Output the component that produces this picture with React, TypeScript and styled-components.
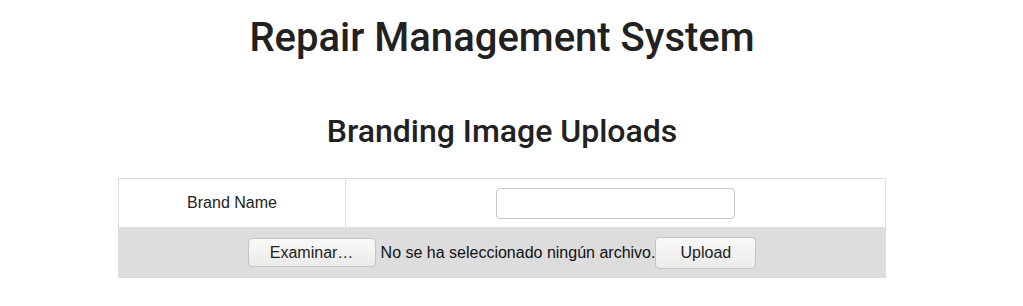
import styled, { createGlobalStyle } from 'styled-components';

const GlobalStyle = createGlobalStyle`
  html, body {
    margin: 0;
    padding: 0;
    background: #fff;
  }
  body {
    font-family: "Liberation Sans", Arial, sans-serif;
    color: #222;
  }
`;

const Page = styled.div`
  width: 1004px;
  display: flex;
  flex-direction: column;
  align-items: center;
  padding-top: 14px;
`;

const Title = styled.h1`
  margin: 0;
  font-family: Roboto, "Noto Sans", sans-serif;
  font-weight: 500;
  font-size: 40px;
  line-height: 48px;
  color: #212121;
`;

const Subtitle = styled.h2`
  margin: 50px 0 28px;
  font-family: Roboto, "Noto Sans", sans-serif;
  font-weight: 500;
  font-size: 32px;
  line-height: 38px;
  color: #212121;
`;

const Table = styled.table`
  width: 768px;
  border-collapse: collapse;
  font-size: 16px;
`;

const Row = styled.tr<{ $shaded?: boolean }>`
  background: ${(p) => (p.$shaded ? '#dddddd' : '#fff')};
`;

const Cell = styled.td<{ $width?: number; $height: number }>`
  border: 1px solid #dddddd;
  width: ${(p) => (p.$width ? `${p.$width}px` : 'auto')};
  height: ${(p) => p.$height}px;
  padding: 0;
  text-align: center;
  vertical-align: middle;
`;

const TextInput = styled.input`
  width: 239px;
  height: 31px;
  box-sizing: border-box;
  border: 1px solid #c8c8c8;
  border-radius: 4px;
  background: #fff;
  font: inherit;
  outline: none;
`;

const UploadLine = styled.div`
  display: flex;
  align-items: center;
  justify-content: center;
`;

const FakeButton = styled.button<{ $width: number; $height: number }>`
  width: ${(p) => p.$width}px;
  height: ${(p) => p.$height}px;
  padding: 0;
  box-sizing: border-box;
  border: 1px solid #c4c4c4;
  border-radius: 4px;
  background: linear-gradient(#f8f8f6, #ebebe9);
  font-family: "Liberation Sans", Arial, sans-serif;
  font-size: 16px;
  color: #222;
  cursor: pointer;
`;

const FileStatus = styled.span`
  margin-left: 5px;
  color: #111;
`;

export default function App() {
  return (
    <>
      <GlobalStyle />
      <Page>
        <Title>Repair Management System</Title>
        <Subtitle>Branding Image Uploads</Subtitle>
        <Table>
          <tbody>
            <Row>
              <Cell $width={226} $height={48}>Brand Name</Cell>
              <Cell $height={48}>
                <TextInput type="text" />
              </Cell>
            </Row>
            <Row $shaded>
              <Cell colSpan={2} $height={49}>
                <UploadLine>
                  <FakeButton type="button" $width={128} $height={29}>Examinar…</FakeButton>
                  <FileStatus>No se ha seleccionado ningún archivo.</FileStatus>
                  <FakeButton type="button" $width={101} $height={32}>Upload</FakeButton>
                </UploadLine>
              </Cell>
            </Row>
          </tbody>
        </Table>
      </Page>
    </>
  );
}
